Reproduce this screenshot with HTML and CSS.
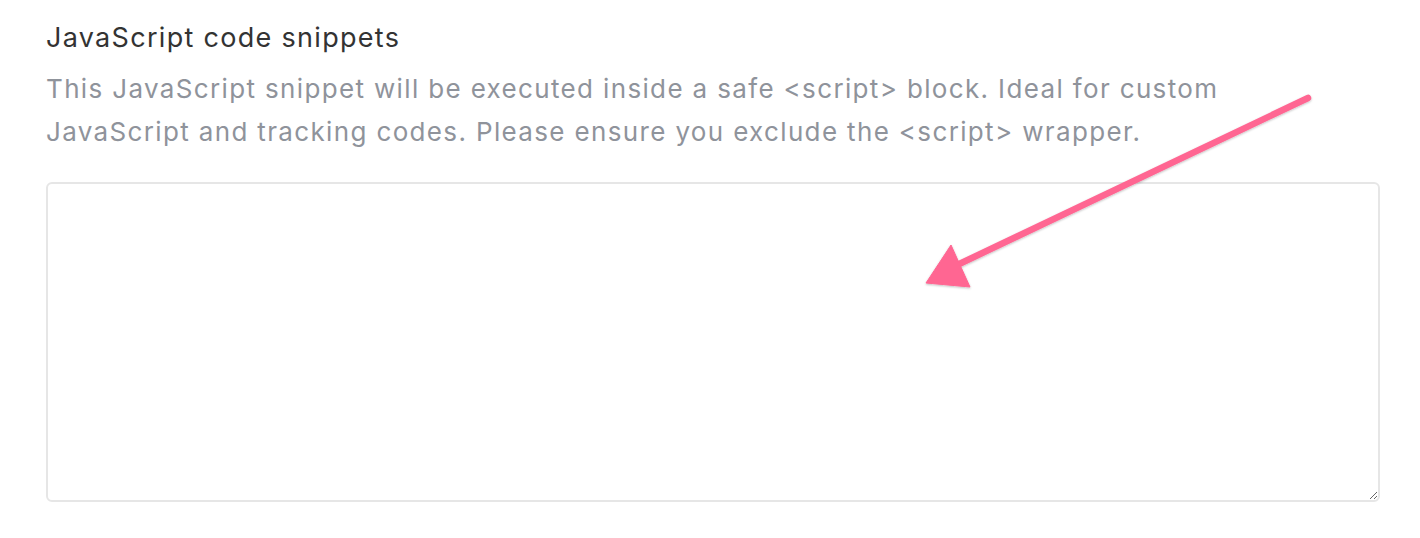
FILE: index.html
```html
<!DOCTYPE html>
<html>
<head>
<meta charset="utf-8">
<link rel="stylesheet" href="styles.css">
</head>
<body>
<div class="page">
  <div class="field">
    <label class="title">JavaScript code snippets</label>
    <p class="help">This JavaScript snippet will be executed inside a safe &lt;script&gt; block. Ideal for custom JavaScript and tracking codes. Please ensure you exclude the &lt;script&gt; wrapper.</p>
    <textarea class="code"></textarea>
  </div>
  <svg class="arrow" width="1420" height="538" viewBox="0 0 1420 538">
    <defs>
      <filter id="sh" x="-10%" y="-10%" width="120%" height="120%">
        <feDropShadow dx="0" dy="1" stdDeviation="1.2" flood-color="#000" flood-opacity="0.25"/>
      </filter>
    </defs>
    <g filter="url(#sh)" fill="#ff6692" stroke="#ff6692">
      <line x1="1308" y1="98" x2="955" y2="266" stroke-width="6.5" stroke-linecap="round"/>
      <polygon points="926,283 951,245 970,287" stroke-width="1" stroke-linejoin="round"/>
    </g>
  </svg>
</div>
</body>
</html>
```
FILE: styles.css
```css
html, body {
  margin: 0;
  padding: 0;
  background: #ffffff;
}
.page {
  position: relative;
  width: 1420px;
  height: 538px;
  overflow: hidden;
}
.field {
  display: flex;
  flex-direction: column;
  padding: 20px 40px 0 46px;
}
.title {
  font-family: Inter, "Noto Sans", sans-serif;
  font-size: 27px;
  line-height: 36px;
  color: #333333;
  font-weight: 400;
  letter-spacing: 1.3px;
}
.help {
  margin: 11px 0 0 0;
  font-family: Inter, "Noto Sans", sans-serif;
  font-size: 26px;
  line-height: 43px;
  letter-spacing: 1.35px;
  color: #8f939b;
  max-width: 1250px;
}
.code {
  margin-top: 29px;
  height: 320px;
  box-sizing: border-box;
  border: 2px solid #e6e6e6;
  border-radius: 6px;
  background: #fff;
  resize: vertical;
  outline: none;
}
.arrow {
  position: absolute;
  left: 0;
  top: 0;
  pointer-events: none;
}
```
